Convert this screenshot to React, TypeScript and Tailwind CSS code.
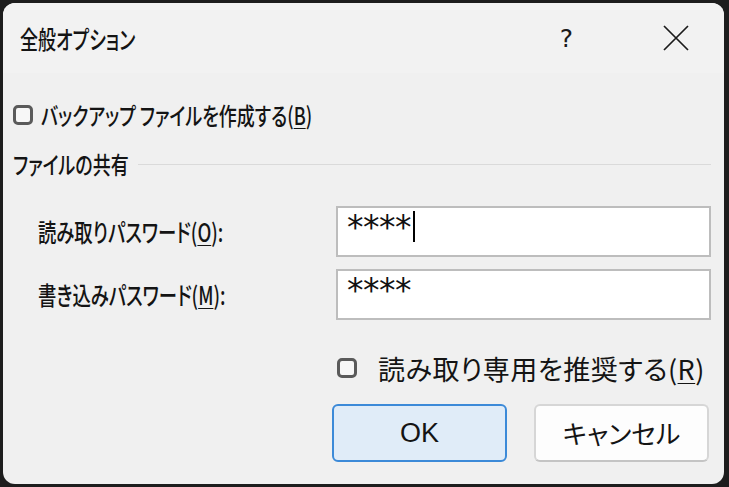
import React from 'react';

const jp = "font-['Noto_Sans_CJK_JP','Noto_Sans',sans-serif] [font-feature-settings:'palt']";

const CheckBox: React.FC = () => (
  <div className="flex-none w-[20px] h-[20px] rounded-[5px] border-[3px] border-[#5a5a5a] bg-[#f7f7f7]" />
);

const U: React.FC<{ children: React.ReactNode }> = ({ children }) => (
  <span className="underline underline-offset-[3px] decoration-1">{children}</span>
);

const PasswordRow: React.FC<{ label: string; mnemonic: string; caret?: boolean; className?: string }> = ({
  label,
  mnemonic,
  caret,
  className,
}) => (
  <div className={`flex items-center ${className ?? ''}`}>
    <div className="w-[323px] flex-none pl-[25px] text-[25px] font-medium text-[#141414] leading-none whitespace-nowrap">
      <span className="inline-block origin-left scale-x-[0.735]">
        {label}(<U>{mnemonic}</U>):
      </span>
    </div>
    <div className="flex-1 h-[51px] bg-white border-2 border-[#bdbdbd] flex items-start pl-[9px] pt-[3px]">
      <span className="font-['DejaVu_Sans',sans-serif] text-[33px] leading-[34px] tracking-[-0.5px] text-[#111]">****</span>
      {caret && <span className="ml-[2px] w-[2px] h-[31px] bg-black" />}
    </div>
  </div>
);

const App: React.FC = () => {
  return (
    <div className={`w-[729px] h-[487px] bg-[#1d1d1d] pt-[3px] pl-[3px] overflow-hidden ${jp}`}>
      <div className="w-[721px] h-[481px] rounded-[12px] bg-[#f0f0f0] flex flex-col overflow-hidden">
        {/* Title bar */}
        <div className="h-[70px] flex-none bg-[#f2f2f2] flex items-center pl-[17px] pr-[34px]">
          <span className="inline-block origin-left scale-x-[0.72] text-[25px] font-medium text-[#141414] leading-none whitespace-nowrap">
            全般オプション
          </span>
          <span className="ml-auto mr-[3px] font-['DejaVu_Sans',sans-serif] text-[25px] text-[#1b1b1b] leading-none">?</span>
          <svg className="ml-[86px]" width="28" height="28" viewBox="0 0 28 28" fill="none">
            <path d="M2 2L26 26M26 2L2 26" stroke="#1b1b1b" strokeWidth="1.7" />
          </svg>
        </div>

        {/* Body */}
        <div className="flex flex-col pl-[10px] pr-[13px]">
          <div className="h-[26px] mt-[29px] flex items-center text-[24px] font-medium text-[#141414] leading-none whitespace-nowrap">
            <CheckBox />
            <span className="ml-[8px] inline-block origin-left scale-x-[0.75]">
              バックアップ ファイルを作成する(<U>B</U>)
            </span>
          </div>

          <div className="h-[26px] mt-[23px] flex items-center text-[24px] font-medium text-[#141414] leading-none whitespace-nowrap">
            <div className="w-[125px] flex-none">
              <span className="inline-block origin-left scale-x-[0.75]">ファイルの共有</span>
            </div>
            <div className="flex-1 h-[1px] bg-[#dadada]" />
          </div>

          <PasswordRow className="mt-[29px]" label="読み取りパスワード" mnemonic="O" caret />
          <PasswordRow className="mt-[12px]" label="書き込みパスワード" mnemonic="M" />

          <div className="h-[26px] mt-[35px] ml-[324px] flex items-center text-[27px] text-[#141414] leading-none whitespace-nowrap">
            <CheckBox />
            <span className="ml-[21px] tracking-[0.5px]">
              読み取り専用を推奨する(<U>R</U>)
            </span>
          </div>

          <div className="mt-[23px] flex justify-end gap-[27px] pr-[2px]">
            <button className="w-[175px] h-[58px] rounded-[6px] bg-[#e0ecf8] border-2 border-[#3c8ad8] text-[27px] leading-none text-[#141414] font-['Liberation_Sans',sans-serif]">
              OK
            </button>
            <button className="w-[175px] h-[58px] rounded-[6px] bg-[#fdfdfd] border-2 border-[#d6d6d6] border-b-[#c4c4c4] text-[26px] leading-none text-[#141414]">
              キャンセル
            </button>
          </div>
        </div>
      </div>
    </div>
  );
};

export default App;
